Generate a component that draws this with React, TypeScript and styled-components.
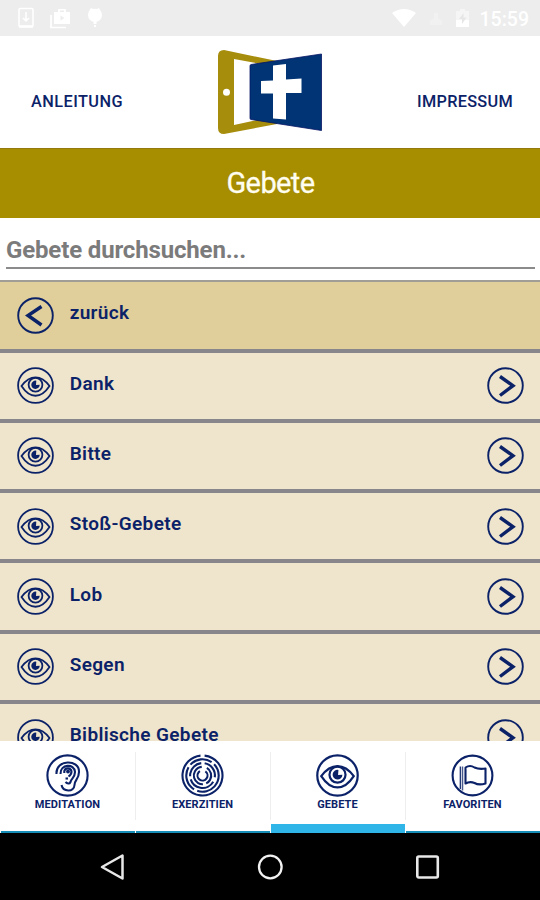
import React from "react";
import styled, { createGlobalStyle } from "styled-components";

const NAVY = "#0b2268";

const GlobalStyle = createGlobalStyle`
  * { box-sizing: border-box; }
  body { margin: 0; background: #fff; overflow: hidden; }
  svg { display: block; flex: none; }
`;

const Screen = styled.div`
  width: 540px;
  height: 900px;
  display: flex;
  flex-direction: column;
  overflow: hidden;
  background: #fff;
  color: ${NAVY};
  font-family: Roboto, sans-serif;
`;

const StatusBar = styled.div`
  height: 36px;
  flex: none;
  display: flex;
  align-items: center;
  justify-content: space-between;
  padding: 0 11px 0 17px;
  background: #ededed;
  color: #fff;
`;

const StatusGroup = styled.div<{ $gap: number }>`
  display: flex;
  align-items: center;
  gap: ${(p) => p.$gap}px;
`;

const Clock = styled.span`
  font-size: 19.5px;
  font-weight: 500;
  line-height: 24px;
  padding-top: 3px;
  margin-left: 1px;
`;

const Header = styled.header`
  height: 112px;
  flex: none;
  display: grid;
  grid-template-columns: 1fr 106px 1fr;
  align-items: center;
  padding: 0 27px 0 31px;
`;

const HeaderLink = styled.span<{ $end?: boolean }>`
  padding-top: 19px;
  font-size: 16.3px;
  font-weight: 500;
  line-height: 20px;
  letter-spacing: ${(p) => (p.$end ? 0.3 : 0.45)}px;
  text-align: ${(p) => (p.$end ? "right" : "left")};
`;

const TitleBar = styled.h1`
  height: 70px;
  flex: none;
  margin: 0;
  display: flex;
  align-items: center;
  justify-content: center;
  padding: 0 0 2px 1px;
  border-top: 1px solid #94790c;
  background: #a78d00;
  color: #fffdf0;
  font-size: 29px;
  font-weight: 400;
  letter-spacing: -0.6px;
  -webkit-text-stroke: 0.3px #fffdf0;
`;

const Search = styled.div`
  height: 62px;
  flex: none;
  padding: 16px 5px 11px 6px;
`;

const SearchField = styled.div`
  height: 35px;
  padding-top: 1px;
  border-bottom: 2px solid #8b8b8b;
  color: #7b7b7b;
  font-size: 24px;
  font-weight: 700;
  line-height: 30px;
  letter-spacing: -0.15px;
`;

const List = styled.ul`
  height: 460.5px;
  flex: none;
  margin: 0;
  padding: 0;
  list-style: none;
  overflow: hidden;
  border-top: 2px solid #a09d96;
`;

const Row = styled.li<{ $back?: boolean }>`
  height: ${(p) => (p.$back ? 70.5 : 70.3)}px;
  display: flex;
  align-items: center;
  padding: 0 16px 0 17px;
  border-bottom: 4px solid #88868a;
  background: ${(p) => (p.$back ? "#e0cf9a" : "#efe5cc")};
`;

const RowLabel = styled.span`
  flex: 1;
  margin: -4px 0 0 15.7px;
  font-size: 19px;
  font-weight: 600;
  line-height: 24px;
  letter-spacing: 0.35px;
`;

const Tabs = styled.nav`
  flex: 1;
  display: grid;
  grid-template-columns: repeat(4, 1fr);
`;

const Tab = styled.div<{ $active?: boolean }>`
  position: relative;
  display: flex;
  flex-direction: column;
  align-items: center;
  padding-top: 13px;
  font-size: 11px;
  font-weight: 700;
  line-height: 14px;
  letter-spacing: 0.1px;
  &::after {
    content: "";
    position: absolute;
    left: 1px;
    right: 0;
    bottom: 0;
    height: ${(p) => (p.$active ? 9 : 2)}px;
    background: ${(p) => (p.$active ? "#2fb5e8" : "#168db5")};
  }
  &:not(:first-child)::before {
    content: "";
    position: absolute;
    left: 0;
    top: 11px;
    bottom: 13px;
    width: 1px;
    background: #eeeeee;
  }
`;

const TabLabel = styled.span`
  margin-top: 1px;
`;

const SystemBar = styled.div`
  height: 67px;
  flex: none;
  display: flex;
  align-items: center;
  justify-content: space-between;
  padding: 0 98px 0 99px;
  background: #000;
`;

const LogoArt = styled.svg`
  margin-left: -2px;
`;

const Logo = () => (
  <LogoArt width="106" height="84" viewBox="0 0 106 84">
    <path fill="#a78d0c" fillRule="evenodd" d="M7 0 60 11V74L7 84Q1 84 1 78V6Q1 0 7 0ZM17 9V75L50 68V15Z" />
    <circle cx="9.5" cy="42.3" r="3.5" fill="#fff" />
    <path d="M34 14.5 104.500 4V80.500L34 69.500Q33 69.500 33 68V16Q33 14.700 34 14.500Z" fill="#003475" stroke="#071566" strokeWidth=".8" />
    <path d="M56 15.500 69 14V29.500L84.500 28.500V43H69V69.500L56 68.500V43.500H44V31L56 30.500Z" fill="#fff" />
  </LogoArt>
);

const Chevron = ({ left }: { left?: boolean }) => (
  <svg width="37" height="37" viewBox="0 0 37 37" fill="none" stroke={NAVY}>
    <circle cx="18.500" cy="18.500" r="17.300" strokeWidth="1.900" />
    <path d={left ? "M24.500 9.500 11 18.500 24.500 28" : "M13 9.500 26 18.700 13 28.500"} strokeWidth="3.400" />
  </svg>
);

const Eye = ({ size = 37, stroke = 1.8 }: { size?: number; stroke?: number }) => (
  <svg width={size} height={size} viewBox="0 0 37 37" fill="none" stroke={NAVY} strokeWidth={stroke}>
    <circle cx="18.500" cy="18.500" r="17.400" />
    <path d="M4.500 19C13 7.500 24 7.500 32.500 19C24 32 13 32 4.500 19Z" />
    <circle cx="18.500" cy="17.800" r="6.900" />
    <path d="M19.300 13.700A4.200 4.200 0 1 0 22.700 17.800L19 18Z" fill={NAVY} stroke="none" />
  </svg>
);

const Ear = () => (
  <svg width="43" height="43" viewBox="0 0 43 43" fill="none" stroke={NAVY} strokeWidth="2.100">
    <circle cx="21.500" cy="21.500" r="20.100" />
    <path d="M10.500 20C9.500 5 33.500 5 33 18C33 25 28.500 26 28.500 31C28 38.500 17 38 15.500 31" />
    <path d="M14.500 20C14 10 28.500 9 29 18C29 24 25 24.500 24.500 28C23.500 30.500 21 29.500 19.500 28" />
    <path d="M18.300 19V17A3.700 3.700 0 0 1 25.500 17.500Q25.500 20.500 22.500 22.500" />
    <circle cx="22" cy="17.500" r="1.900" fill={NAVY} stroke="none" />
    <path d="M19.500 24.500H22" />
  </svg>
);

/* Each ring: radius, dash pattern in degrees, rotation of the first dash. */
const RINGS: [number, string, number][] = [
  [20, "348 12", -84],
  [16.2, "82 12 153 12 89 12", -138],
  [12.4, "88 22 132 14 88 16", -80],
  [8.700, "125 22 178 35", -60],
  [5, "295 65", -55],
];

const Labyrinth = () => (
  <svg width="43" height="43" viewBox="0 0 43 43" fill="none" stroke={NAVY} strokeWidth="2.100">
    {RINGS.map(([r, dash, turn]) => (
      <circle key={r} cx="21.500" cy="21.500" r={r} pathLength="360" strokeDasharray={dash} transform={`rotate(${turn} 21.500 21.500)`} />
    ))}
  </svg>
);

const Flag = () => (
  <svg width="43" height="43" viewBox="0 0 43 43" fill="none" stroke={NAVY} strokeWidth="2.100">
    <circle cx="21.500" cy="21.500" r="19.900" />
    <path d="M9.300 12.500V35" strokeWidth="1.200" />
    <path d="M11.500 12.500V36.500" strokeWidth="1.500" opacity=".75" />
    <path d="M14.500 13.500Q19 10.500 23.500 13.500Q28 15.500 34.500 14.500V29.500Q28 31.500 23.500 29Q19 27 14.500 29.500Z" strokeLinejoin="round" />
  </svg>
);

const DownloadIcon = () => (
  <svg width="18" height="22" viewBox="0 0 18 22" fill="none" stroke="#fff">
    <rect x="2" y="1.500" width="14" height="18" rx="1" strokeWidth="1.500" />
    <path d="M2 19.500H16" strokeWidth="2.600" />
    <path d="M9 5V14M6 11 9 14 12 11" strokeWidth="1.500" />
  </svg>
);

const CaseIcon = () => (
  <svg width="21" height="21" viewBox="0 0 21 21">
    <path d="M1 7V19.500H16" fill="none" stroke="#fff" strokeWidth="1.700" />
    <path fill="#fff" fillRule="evenodd" d="M8 4V2Q8 1 9 1H15Q16 1 16 2V4H20V16H4V4ZM10 4H14V2.500H10ZM10.500 7.500V12.500L14.500 10Z" />
  </svg>
);

const BulbIcon = () => (
  <svg width="18" height="22" viewBox="0 0 18 22" fill="#fff">
    <path d="M4 2.500 5 1 7 2Q9 1.500 11 2L13 1 14 3Q16 5 16 8A7 7 0 0 1 2 8Q2 5 4 2.500Z" />
    <path d="M7.500 14H10.500V17H7.500ZM8 18H10V20H8Z" />
  </svg>
);

const WifiIcon = () => (
  <svg width="26" height="20" viewBox="0 0 26 20"><path fill="#fff" d="M1 5Q13-3 25 5L13 19Z" /></svg>
);

const SignalIcon = () => (
  <svg width="20" height="20" viewBox="0 0 20 20"><path fill="#f1f1f1" d="M4 17V13L8 10V5H12V10L16 13V17Z" /></svg>
);

const BatteryIcon = () => (
  <svg width="15" height="20" viewBox="0 0 15 20">
    <path fill="#f5f5f5" d="M1 3H5V1H10V3H14V19H1Z" />
    <path fill="#fff" d="M1 12H14V19H1Z" />
    <path fill="#e6e6e6" d="M8.500 5 4 11H7V16L11.500 9.500H8.500Z" />
  </svg>
);

const ITEMS = ["Dank", "Bitte", "Stoß-Gebete", "Lob", "Segen", "Biblische Gebete"];

const TABS = [
  { label: "MEDITATION", icon: <Ear /> },
  { label: "EXERZITIEN", icon: <Labyrinth /> },
  { label: "GEBETE", icon: <Eye size={43} stroke={1.9} />, active: true },
  { label: "FAVORITEN", icon: <Flag /> },
];

export default function App() {
  return (
    <>
      <GlobalStyle />
      <Screen>
        <StatusBar>
          <StatusGroup $gap={15}>
            <DownloadIcon />
            <CaseIcon />
            <BulbIcon />
          </StatusGroup>
          <StatusGroup $gap={9}>
            <WifiIcon />
            <SignalIcon />
            <BatteryIcon />
            <Clock>15:59</Clock>
          </StatusGroup>
        </StatusBar>
        <Header>
          <HeaderLink>ANLEITUNG</HeaderLink>
          <Logo />
          <HeaderLink $end>IMPRESSUM</HeaderLink>
        </Header>
        <TitleBar>Gebete</TitleBar>
        <Search>
          <SearchField>Gebete durchsuchen...</SearchField>
        </Search>
        <List>
          <Row $back>
            <Chevron left />
            <RowLabel>zurück</RowLabel>
          </Row>
          {ITEMS.map((item) => (
            <Row key={item}>
              <Eye />
              <RowLabel>{item}</RowLabel>
              <Chevron />
            </Row>
          ))}
        </List>
        <Tabs>
          {TABS.map((tab) => (
            <Tab key={tab.label} $active={tab.active}>
              {tab.icon}
              <TabLabel>{tab.label}</TabLabel>
            </Tab>
          ))}
        </Tabs>
        <SystemBar>
          <svg width="28" height="30" viewBox="0 0 28 30" fill="none" stroke="#e8e8e8" strokeWidth="2.500">
            <path d="M23.500 3.500V26.500L3 15Z" strokeLinejoin="round" />
          </svg>
          <svg width="28" height="28" viewBox="0 0 28 28" fill="none" stroke="#f2f2f2" strokeWidth="2.300">
            <circle cx="13.300" cy="14" r="11.300" />
          </svg>
          <svg width="28" height="28" viewBox="0 0 28 28" fill="none" stroke="#e8e8e8" strokeWidth="2.600">
            <rect x="3.300" y="3.500" width="20.500" height="21" rx="1.500" />
          </svg>
        </SystemBar>
      </Screen>
    </>
  );
}
